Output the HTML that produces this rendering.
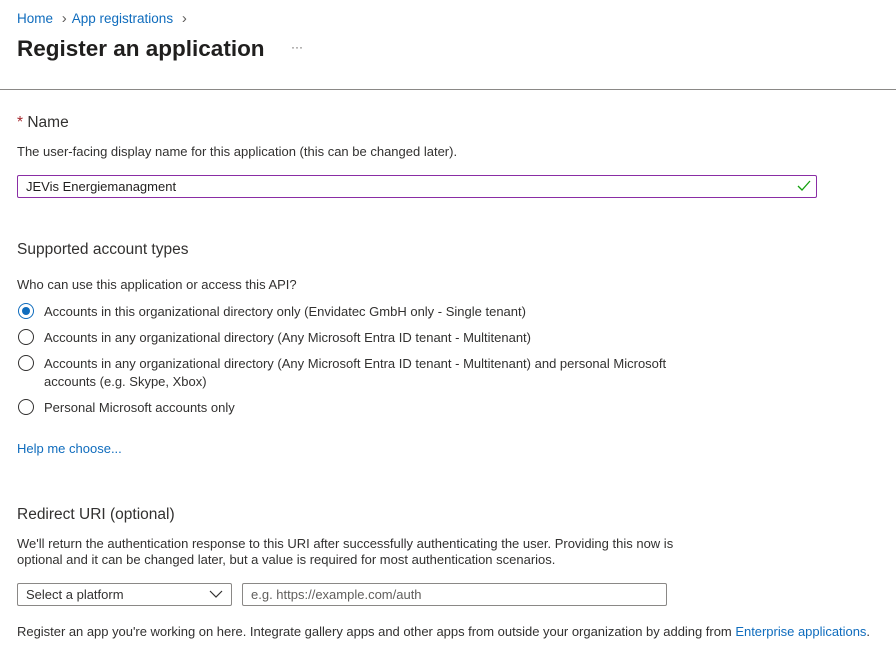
<!DOCTYPE html>
<html><head><meta charset="utf-8"><style>
body{margin:0;width:896px;height:654px;background:#fff;font-family:"Liberation Sans",sans-serif;color:#323130;position:relative;overflow:hidden}
.a{position:absolute;white-space:nowrap}
.s{font-size:13px}
.link{color:#0f6cbd}
.h{font-size:15.5px;color:#323130}
.radio{position:absolute;width:16px;height:16px;border:1px solid #323130;border-radius:50%;box-sizing:border-box;left:18px}
</style></head><body>
<div class="a link" style="left:17px;top:10px;font-size:13.5px">Home <span style="color:#605e5c;margin:0 5px;font-size:15px">›</span>App registrations <span style="color:#605e5c;margin-left:5px;font-size:15px">›</span></div>
<div class="a" style="left:17px;top:36px;font-size:22.5px;font-weight:600;color:#201f1e">Register an application</div>
<div class="a" style="left:291px;top:40px;font-size:12px;color:#605e5c">···</div>
<div class="a" style="left:0;top:89px;width:896px;height:1px;background:#8a8886"></div>
<div class="a h" style="left:17px;top:114px"><span style="color:#a4262c">*</span> Name</div>
<div class="a s" style="left:17px;top:144px">The user-facing display name for this application (this can be changed later).</div>
<div class="a" style="left:17px;top:175px;width:800px;height:23px;border:1px solid #8a2da5;box-sizing:border-box;border-radius:2px"></div>
<div class="a s" style="left:26px;top:179px;color:#201f1e">JEVis Energiemanagment</div>
<svg class="a" style="left:797px;top:180px" width="14" height="12"><path d="M1 6 L5 10 L13 1" stroke="#13a10e" stroke-width="1.3" fill="none"/></svg>
<div class="a h" style="left:17px;top:241px">Supported account types</div>
<div class="a s" style="left:17px;top:277px">Who can use this application or access this API?</div>
<div class="radio" style="top:303px;border-color:#0f6cbd"><div style="position:absolute;left:3px;top:3px;width:8px;height:8px;border-radius:50%;background:#0f6cbd"></div></div>
<div class="a s" style="left:44px;top:304px">Accounts in this organizational directory only (Envidatec GmbH only - Single tenant)</div>
<div class="radio" style="top:329px"></div>
<div class="a s" style="left:44px;top:330px">Accounts in any organizational directory (Any Microsoft Entra ID tenant - Multitenant)</div>
<div class="radio" style="top:355px"></div>
<div class="a s" style="left:44px;top:356px">Accounts in any organizational directory (Any Microsoft Entra ID tenant - Multitenant) and personal Microsoft</div>
<div class="a s" style="left:44px;top:374px">accounts (e.g. Skype, Xbox)</div>
<div class="radio" style="top:399px"></div>
<div class="a s" style="left:44px;top:400px">Personal Microsoft accounts only</div>
<div class="a s link" style="left:17px;top:441px">Help me choose...</div>
<div class="a h" style="left:17px;top:506px">Redirect URI (optional)</div>
<div class="a s" style="left:17px;top:536px">We'll return the authentication response to this URI after successfully authenticating the user. Providing this now is</div>
<div class="a s" style="left:17px;top:552px">optional and it can be changed later, but a value is required for most authentication scenarios.</div>
<div class="a" style="left:17px;top:583px;width:215px;height:23px;border:1px solid #8a8886;box-sizing:border-box;border-radius:2px"></div>
<div class="a s" style="left:26px;top:587px">Select a platform</div>
<svg class="a" style="left:209px;top:590px" width="14" height="9"><path d="M1 1 L7 7 L13 1" stroke="#323130" stroke-width="1.2" fill="none"/></svg>
<div class="a" style="left:242px;top:583px;width:425px;height:23px;border:1px solid #8a8886;box-sizing:border-box;border-radius:2px"></div>
<div class="a s" style="left:251px;top:587px;color:#605e5c">e.g. https://example.com/auth</div>
<div class="a s" style="left:17px;top:624px;letter-spacing:-0.02px">Register an app you're working on here. Integrate gallery apps and other apps from outside your organization by adding from <span class="link">Enterprise applications</span>.</div>
</body></html>
